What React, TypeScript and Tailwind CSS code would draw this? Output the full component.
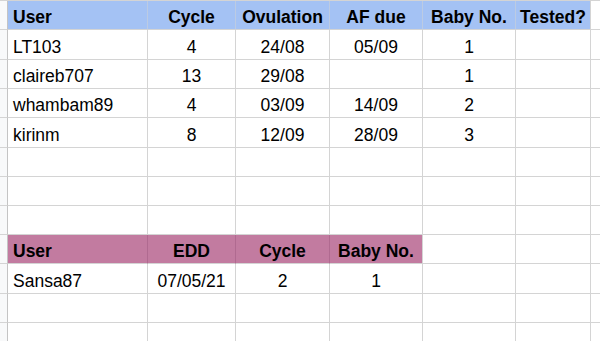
import React from 'react';

type Cell = { text?: string; bold?: boolean; center?: boolean };
type Row = { height: number; fill?: 'blue' | 'pink'; fillCols?: number; cells: Cell[] };

const empty = (): Cell[] => [{}, {}, {}, {}, {}, {}, {}];

const rows: Row[] = [
  {
    height: 29,
    fill: 'blue',
    fillCols: 6,
    cells: [
      { text: 'User', bold: true },
      { text: 'Cycle', bold: true, center: true },
      { text: 'Ovulation', bold: true, center: true },
      { text: 'AF due', bold: true, center: true },
      { text: 'Baby No.', bold: true, center: true },
      { text: 'Tested?', bold: true, center: true },
      {},
    ],
  },
  {
    height: 30,
    cells: [
      { text: 'LT103' },
      { text: '4', center: true },
      { text: '24/08', center: true },
      { text: '05/09', center: true },
      { text: '1', center: true },
      {},
      {},
    ],
  },
  {
    height: 29,
    cells: [
      { text: 'claireb707' },
      { text: '13', center: true },
      { text: '29/08', center: true },
      {},
      { text: '1', center: true },
      {},
      {},
    ],
  },
  {
    height: 29,
    cells: [
      { text: 'whambam89' },
      { text: '4', center: true },
      { text: '03/09', center: true },
      { text: '14/09', center: true },
      { text: '2', center: true },
      {},
      {},
    ],
  },
  {
    height: 30,
    cells: [
      { text: 'kirinm' },
      { text: '8', center: true },
      { text: '12/09', center: true },
      { text: '28/09', center: true },
      { text: '3', center: true },
      {},
      {},
    ],
  },
  { height: 29, cells: empty() },
  { height: 29, cells: empty() },
  { height: 29, cells: empty() },
  {
    height: 29,
    fill: 'pink',
    fillCols: 4,
    cells: [
      { text: 'User', bold: true },
      { text: 'EDD', bold: true, center: true },
      { text: 'Cycle', bold: true, center: true },
      { text: 'Baby No.', bold: true, center: true },
      {},
      {},
      {},
    ],
  },
  {
    height: 30,
    cells: [
      { text: 'Sansa87' },
      { text: '07/05/21', center: true },
      { text: '2', center: true },
      { text: '1', center: true },
      {},
      {},
      {},
    ],
  },
  { height: 29, cells: empty() },
  { height: 29, cells: empty() },
];

const colWidths = ['w-[140px]', 'w-[88px]', 'w-[94px]', 'w-[93px]', 'w-[93px]', 'w-[75px]', 'flex-1'];

const App = () => {
  return (
    <div
      className="w-[600px] h-[341px] overflow-hidden bg-white text-black border-t border-[#d4d4d4]"
      style={{ fontFamily: '"Liberation Sans", Arial, sans-serif' }}
    >
      {rows.map((row, r) => (
        <div key={r} className="flex" style={{ height: row.height }}>
          <div className="w-[8px] shrink-0 bg-[#f8f9fa] border-r border-b border-r-[#c4c4c4] border-b-[#d4d4d4]" />
          {row.cells.map((cell, c) => {
            const filled = row.fill && c < (row.fillCols ?? 0);
            const bg = filled ? (row.fill === 'blue' ? 'bg-[#a4c2f4]' : 'bg-[#c27ba0]') : 'bg-white';
            const rightBorder =
              filled && c < (row.fillCols ?? 0) - 1
                ? row.fill === 'blue'
                  ? 'border-r-[#bccbe3]'
                  : 'border-r-[#b06a90]'
                : 'border-r-[#d4d4d4]';
            return (
              <div
                key={c}
                className={`${colWidths[c]} shrink-0 box-border border-r border-b border-b-[#d4d4d4] ${rightBorder} ${bg} flex items-end px-[5px] pb-[2px] overflow-hidden whitespace-nowrap ${
                  cell.center ? 'justify-center' : 'justify-start'
                }`}
              >
                <span className={`text-[17.5px] leading-[20px] ${cell.bold ? 'font-bold' : 'font-normal'}`}>
                  {cell.text ?? ''}
                </span>
              </div>
            );
          })}
        </div>
      ))}
    </div>
  );
};

export default App;
